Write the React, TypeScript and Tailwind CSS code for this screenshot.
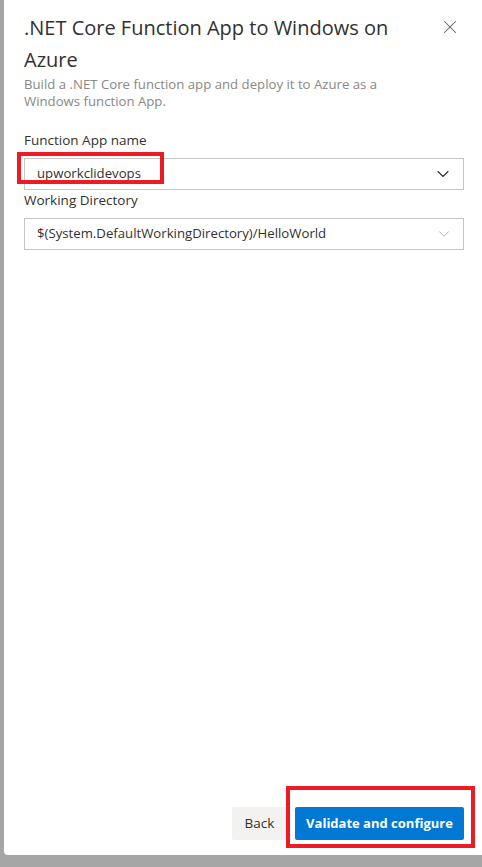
import { ChevronDown, X } from "lucide-react";

const font = { fontFamily: '"Segoe UI", "Open Sans", "Noto Sans", sans-serif' };

function Dropdown({ value, muted }: { value: string; muted?: boolean }) {
  return (
    <div className="flex h-[32px] items-center justify-between border border-[#c8c6c4] bg-white pl-3 pr-[10px]">
      <span className="text-[13.2px] text-[#323130]">{value}</span>
      <ChevronDown
        className={muted ? "h-[18px] w-[18px] text-[#b3b0ad]" : "h-[20px] w-[20px] text-[#323130]"}
        strokeWidth={1.3}
      />
    </div>
  );
}

export default function App() {
  return (
    <div className="flex h-[867px] w-[482px] flex-col bg-[#a6a6a6]" style={font}>
      <div className="ml-[4px] flex h-[855px] flex-col rounded-bl-[4px] bg-white">
        <div className="relative flex-1 pl-5 pr-[18px] pt-3">
          <div className="flex items-start justify-between">
            <h1 className="text-[20px] leading-[32px] text-[#323130]">
              .NET Core Function App to Windows on
              <br />
              Azure
            </h1>
            <button className="mr-[3px] mt-[4px] text-[#605e5c]">
              <X className="h-[22px] w-[22px]" strokeWidth={1.1} />
            </button>
          </div>
          <p className="text-[13.2px] leading-[17px] text-[#8a8886]">
            Build a .NET Core function app and deploy it to Azure as a
            <br />
            Windows function App.
          </p>

          <div className="mt-5 text-[13.5px] leading-[20px] text-[#323130]">Function App name</div>
          <div className="mt-2">
            <Dropdown value="upworkclidevops" />
          </div>
          <div className="text-[13.5px] leading-[20px] text-[#323130]">Working Directory</div>
          <div className="mt-2">
            <Dropdown value="$(System.DefaultWorkingDirectory)/HelloWorld" muted />
          </div>

          <div className="absolute left-[13px] top-[152px] h-[32px] w-[147px] border-4 border-[#ed1c24]" />
        </div>

        <div className="relative flex justify-end gap-2 pb-[15px] pr-[18px]">
          <button className="h-[33px] w-[55px] rounded-[2px] bg-[#f3f2f1] text-[13.5px] text-[#323130]">
            Back
          </button>
          <button className="h-[33px] w-[169px] rounded-[2px] bg-[#0078d4] text-[13px] font-bold text-white">
            Validate and configure
          </button>
          <div className="absolute right-[7px] top-[-21px] h-[62px] w-[189px] border-4 border-[#ed1c24]" />
        </div>
      </div>
    </div>
  );
}
